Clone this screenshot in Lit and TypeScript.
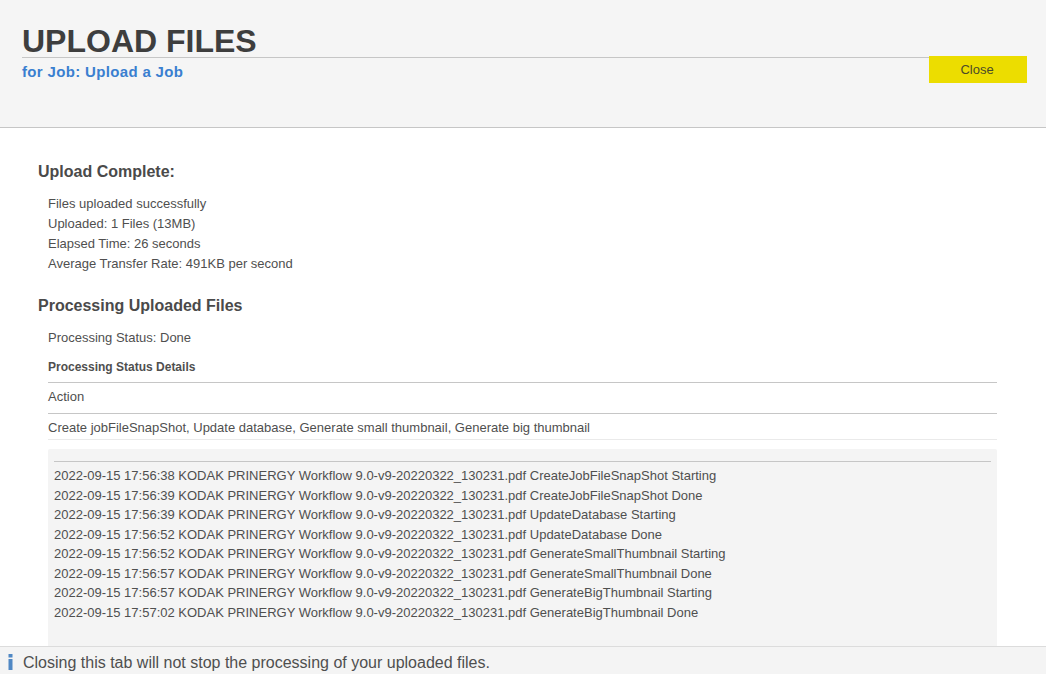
import { LitElement, html, css } from "lit";
import { customElement } from "lit/decorators.js";

const LOG = [
  "2022-09-15 17:56:38 KODAK PRINERGY Workflow 9.0-v9-20220322_130231.pdf CreateJobFileSnapShot Starting",
  "2022-09-15 17:56:39 KODAK PRINERGY Workflow 9.0-v9-20220322_130231.pdf CreateJobFileSnapShot Done",
  "2022-09-15 17:56:39 KODAK PRINERGY Workflow 9.0-v9-20220322_130231.pdf UpdateDatabase Starting",
  "2022-09-15 17:56:52 KODAK PRINERGY Workflow 9.0-v9-20220322_130231.pdf UpdateDatabase Done",
  "2022-09-15 17:56:52 KODAK PRINERGY Workflow 9.0-v9-20220322_130231.pdf GenerateSmallThumbnail Starting",
  "2022-09-15 17:56:57 KODAK PRINERGY Workflow 9.0-v9-20220322_130231.pdf GenerateSmallThumbnail Done",
  "2022-09-15 17:56:57 KODAK PRINERGY Workflow 9.0-v9-20220322_130231.pdf GenerateBigThumbnail Starting",
  "2022-09-15 17:57:02 KODAK PRINERGY Workflow 9.0-v9-20220322_130231.pdf GenerateBigThumbnail Done",
];

@customElement("app-root")
export class AppRoot extends LitElement {
  static styles = css`
    :host {
      display: flex;
      flex-direction: column;
      height: 674px;
      overflow: hidden;
      background: #fff;
      color: #4f4f4f;
      font-family: "Liberation Sans", Arial, sans-serif;
      font-size: 13px;
    }
    .header {
      height: 127px;
      flex: none;
      box-sizing: content-box;
      background: #f5f5f5;
      border-bottom: 1px solid #c6c6c6;
      padding: 0 19px 0 22px;
    }
    h1 {
      margin: 0;
      padding-top: 24px;
      height: 33px;
      box-sizing: content-box;
      border-bottom: 1px solid #c6c6c6;
      font-size: 32px;
      line-height: 35px;
      font-weight: 700;
      color: #3e3e3e;
    }
    .sub {
      display: flex;
      justify-content: space-between;
      align-items: flex-start;
    }
    .job {
      font-size: 15px;
      font-weight: 700;
      line-height: 18px;
      margin-top: 5px;
      letter-spacing: 0.34px;
      color: #3a7fd0;
    }
    .close {
      width: 98px;
      height: 27px;
      margin-top: -2px;
      border: 0;
      padding: 0 2px 0 0;
      background: #ecdd00;
      color: #4a4a2a;
      font: 13px/27px "Liberation Sans", Arial, sans-serif;
    }
    .main {
      flex: 1;
      min-height: 0;
      overflow: hidden;
      padding: 0 49px 0 38px;
    }
    h2 {
      margin: 0;
      font-size: 16px;
      line-height: 20px;
      font-weight: 700;
      color: #4a4a4a;
    }
    h2.first { margin-top: 34px; }
    h2.second { margin-top: 21.4px; }
    .lines {
      margin: 12px 0 0 10px;
      line-height: 20.1px;
    }
    .status { margin: 12px 0 0 10px; line-height: 20px; }
    .table { margin: 4px 0 0 10px; }
    .row {
      height: 30px;
      line-height: 28px;
      border-bottom: 1px solid #c6c6c6;
    }
    .row.t { font-size: 12px; font-weight: 700; line-height: 30px; }
    .row.last { border-bottom-color: #eaeaea; height: 25px; line-height: 27px; }
    .log {
      margin: 9px 0 0 10px;
      height: 260px;
      padding: 12px 6px 0;
      background: #f4f4f4;
      border-radius: 2px;
    }
    .log hr {
      margin: 0 0 4.6px;
      border: 0;
      border-top: 1px solid #c6c6c6;
    }
    .log div { line-height: 19.5px; white-space: nowrap; }
    .footer {
      flex: none;
      background: #f4f4f4;
      border-top: 1px solid #dcdcdc;
      display: flex;
      align-items: center;
      gap: 10px;
      padding: 5px 0 0 8px;
      box-sizing: border-box;
      height: 28px;
      font-size: 16px;
      color: #4f4f4f;
    }
    .footer svg { flex: none; margin-top: -3px; }
  `;

  render() {
    return html`
      <div class="header">
        <h1>UPLOAD FILES</h1>
        <div class="sub">
          <div class="job">for Job: Upload a Job</div>
          <button class="close">Close</button>
        </div>
      </div>
      <div class="main">
        <h2 class="first">Upload Complete:</h2>
        <div class="lines">
          <div>Files uploaded successfully</div>
          <div>Uploaded: 1 Files (13MB)</div>
          <div>Elapsed Time: 26 seconds</div>
          <div>Average Transfer Rate: 491KB per second</div>
        </div>
        <h2 class="second">Processing Uploaded Files</h2>
        <div class="status">Processing Status: Done</div>
        <div class="table">
          <div class="row t">Processing Status Details</div>
          <div class="row">Action</div>
          <div class="row last">Create jobFileSnapShot, Update database, Generate small thumbnail, Generate big thumbnail</div>
        </div>
        <div class="log">
          <hr />
          ${LOG.map((l) => html`<div>${l}</div>`)}
        </div>
      </div>
      <div class="footer">
        <svg width="5" height="16" viewBox="0 0 5 16"><rect x="0.5" y="0" width="4" height="3.5" fill="#5088c4"/><rect x="0.5" y="5" width="4" height="11" fill="#5088c4"/></svg>
        <span>Closing this tab will not stop the processing of your uploaded files.</span>
      </div>
    `;
  }
}
